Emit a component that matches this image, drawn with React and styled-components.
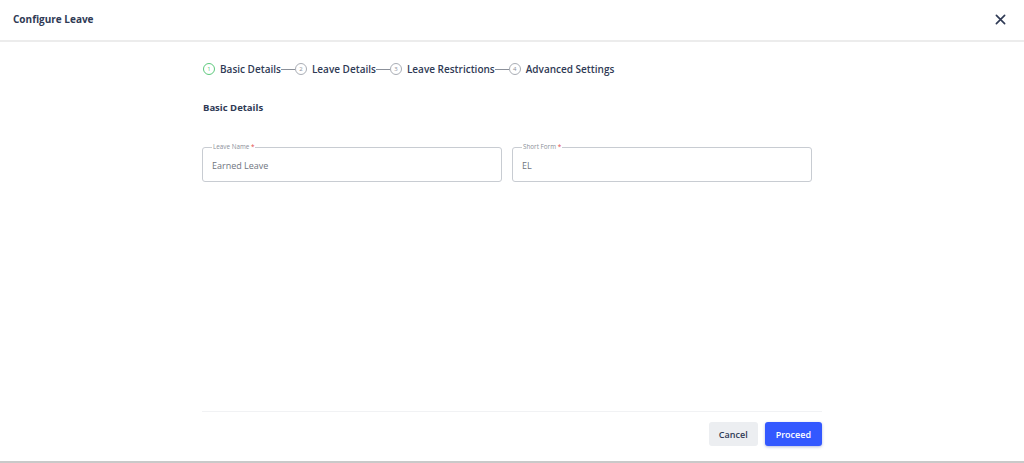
import React from 'react';
import styled, { createGlobalStyle } from 'styled-components';

const GlobalStyle = createGlobalStyle`
	* { box-sizing: border-box; }
	html, body { margin: 0; padding: 0; background: #ffffff; }
	body { font-family: "Open Sans", "Noto Sans", Arial, sans-serif; color: #2f3a55; }
`;

const Page = styled.div`
	height: 100vh;
	display: flex;
	flex-direction: column;
	border-bottom: 2px solid #c9c9c9;
`;

const Header = styled.header`
	height: 42px;
	flex: none;
	display: flex;
	align-items: center;
	justify-content: space-between;
	padding: 0 18px 2px 13px;
	border-bottom: 2px solid #ececec;
`;

const Title = styled.h1`
	margin: 0;
	font-size: 10px;
	font-weight: 700;
	color: #2f3a55;
`;

const CloseButton = styled.button`
	border: none;
	background: none;
	padding: 0;
	display: flex;
	color: #2f3a55;
	cursor: pointer;
`;

const Body = styled.main`
	flex: 1;
	width: 620px;
	margin: 0 auto;
	display: flex;
	flex-direction: column;
`;

const Stepper = styled.ol`
	list-style: none;
	margin: 0;
	padding: 19px 0 0 1px;
	display: flex;
	align-items: center;
	height: 35px;
`;

const Step = styled.li`
	display: flex;
	align-items: center;
	gap: 5px;
	font-size: 10px;
	font-weight: 600;
	color: #2f3a55;
`;

const StepCircle = styled.span`
	width: 12px;
	height: 12px;
	border-radius: 50%;
	border: 1px solid ${(p) => (p.$active ? '#5cc97c' : '#a9adb5')};
	color: ${(p) => (p.$active ? '#5cc97c' : '#8b9099')};
	font-size: 6px;
	font-weight: 400;
	display: flex;
	align-items: center;
	justify-content: center;
	line-height: 1;
`;

const Connector = styled.span`
	width: 14px;
	height: 1px;
	background: #8b9099;
`;

const SectionTitle = styled.h2`
	margin: 24px 0 0 1px;
	font-size: 9.5px;
	font-weight: 700;
	color: #2f3a55;
`;

const FieldRow = styled.div`
	margin-top: 30px;
	display: grid;
	grid-template-columns: 300px 300px;
	gap: 10px;
`;

const Field = styled.fieldset`
	margin: 0;
	padding: 0 9px;
	height: 38px;
	border: 1px solid #c8ccd2;
	border-radius: 3px;
	display: flex;
	align-items: center;
`;

const Legend = styled.legend`
	padding: 0 1px;
	margin-left: 0;
	font-size: 6.3px;
	color: #8b9099;
	line-height: 1;
`;

const Required = styled.span`
	color: #e24a4a;
`;

const Input = styled.input`
	border: none;
	outline: none;
	width: 100%;
	padding: 0;
	font-family: inherit;
	font-size: 9px;
	color: #6f7580;
	background: transparent;
`;

const Footer = styled.footer`
	margin-top: auto;
	border-top: 1px solid #f1f2f4;
	padding: 10px 0 15px;
	display: flex;
	justify-content: flex-end;
	gap: 7px;
`;

const Button = styled.button`
	height: 24px;
	padding: 0 ${(p) => (p.$primary ? '11px' : '10px')};
	border: none;
	border-radius: 3px;
	font-family: inherit;
	font-size: 9px;
	font-weight: 600;
	cursor: pointer;
	background: ${(p) => (p.$primary ? '#3358ff' : '#eceef1')};
	color: ${(p) => (p.$primary ? '#ffffff' : '#2f3a55')};
	box-shadow: ${(p) => (p.$primary ? '0 1px 3px rgba(40, 60, 160, 0.35)' : 'none')};
`;

const steps = ['Basic Details', 'Leave Details', 'Leave Restrictions', 'Advanced Settings'];

export default function App() {
	return (
		<>
			<GlobalStyle />
			<Page>
				<Header>
					<Title>Configure Leave</Title>
					<CloseButton aria-label="Close">
						<svg width="11" height="11" viewBox="0 0 12 12">
							<path d="M1.5 1.5 L10.5 10.5 M10.5 1.5 L1.5 10.5" stroke="currentColor" strokeWidth="1.8" strokeLinecap="round" />
						</svg>
					</CloseButton>
				</Header>
				<Body>
					<Stepper>
						{steps.map((label, i) => (
							<React.Fragment key={label}>
								{i > 0 && <Connector />}
								<Step>
									<StepCircle $active={i === 0}>{i + 1}</StepCircle>
									{label}
								</Step>
							</React.Fragment>
						))}
					</Stepper>
					<SectionTitle>Basic Details</SectionTitle>
					<FieldRow>
						<Field>
							<Legend>Leave Name <Required>*</Required></Legend>
							<Input defaultValue="Earned Leave" />
						</Field>
						<Field>
							<Legend>Short Form <Required>*</Required></Legend>
							<Input defaultValue="EL" />
						</Field>
					</FieldRow>
					<Footer>
						<Button>Cancel</Button>
						<Button $primary>Proceed</Button>
					</Footer>
				</Body>
			</Page>
		</>
	);
}
